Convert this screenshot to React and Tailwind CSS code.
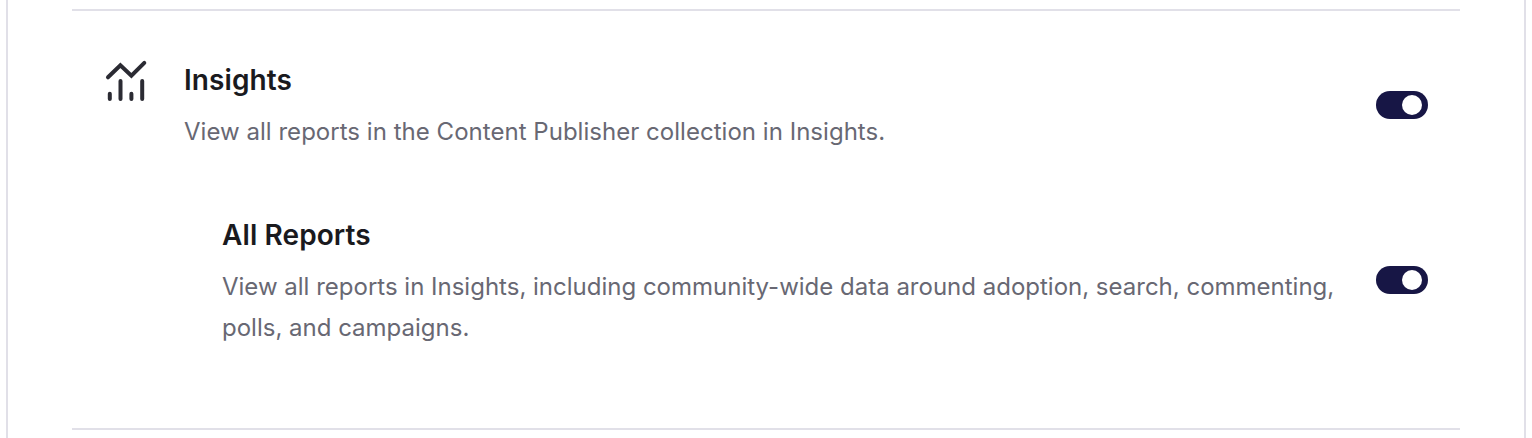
const InsightsIcon = () => (
  <svg
    width="44"
    height="44"
    viewBox="0 0 44 44"
    fill="none"
    stroke="#2b2b33"
    strokeWidth="4"
    strokeLinecap="round"
    strokeLinejoin="miter"
  >
    <path d="M4 17.3 16.4 5.2l11 10.4L40.3 2.9" />
    <path d="M5.8 33.7V39M16.5 21v18M27.4 33.7V39M38.2 21v18" />
  </svg>
);

const Toggle = ({ label }) => {
  return (
    <button
      type="button"
      role="switch"
      aria-checked="true"
      aria-label={label}
      className="flex h-7 w-[52px] shrink-0 items-center justify-end rounded-full bg-[#171645] px-1.5"
    >
      <span className="h-5 w-5 rounded-full bg-white" />
    </button>
  );
};

const PermissionText = ({ title, description }) => {
  return (
    <div>
      <h3 className="text-[28px] leading-10 font-semibold tracking-[0.1px] text-[#1a1a1e]">
        {title}
      </h3>
      <p className="mt-[11px] text-[24px] leading-[41px] text-[#686873]">
        {description}
      </p>
    </div>
  );
};

export default function App() {
  return (
    <div className="h-[438px] overflow-hidden bg-white px-1.5 font-['Inter',sans-serif]">
      <div className="h-full border-x-2 border-[#e1e0e8] px-16 pt-[9px]">
        <section className="h-[421px] border-y-2 border-[#e1e0e8] px-8 pt-[49px]">
          <div className="flex items-start">
            <div className="w-20 shrink-0">
              <InsightsIcon />
            </div>
            <div className="flex-1 tracking-[0.03px]">
              <PermissionText
                title="Insights"
                description="View all reports in the Content Publisher collection in Insights."
              />
            </div>
            <div className="pt-[31px]">
              <Toggle label="Insights" />
            </div>
          </div>

          <div className="mt-[63px] flex items-start pl-[118px]">
            <div className="w-[1126px]">
              <PermissionText
                title="All Reports"
                description="View all reports in Insights, including community-wide data around adoption, search, commenting, polls, and campaigns."
              />
            </div>
            <div className="ml-auto pt-[51px]">
              <Toggle label="All Reports" />
            </div>
          </div>
        </section>
      </div>
    </div>
  );
}
